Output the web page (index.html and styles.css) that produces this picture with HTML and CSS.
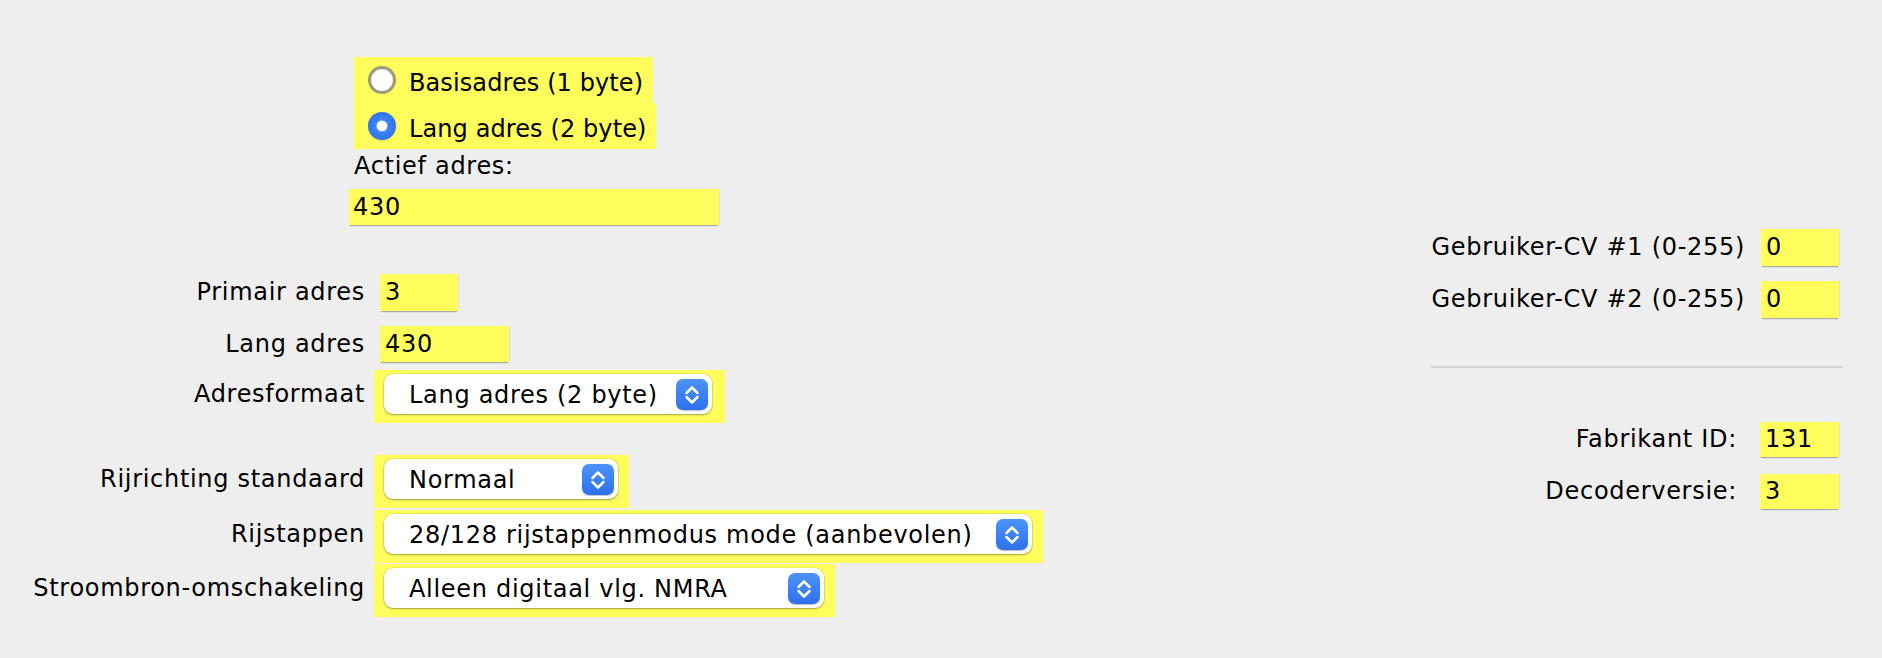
FILE: index.html
```html
<!DOCTYPE html>
<html lang="nl">
<head>
<meta charset="utf-8">
<title>Decoder adres</title>
<link rel="stylesheet" href="styles.css">
</head>
<body>
<div class="page">
  <div class="left">
    <div class="radio-group">
      <div class="radio-row">
        <span class="radio"></span>
        <span class="radio-text">Basisadres (1 byte)</span>
      </div>
      <div class="radio-row">
        <span class="radio selected"></span>
        <span class="radio-text">Lang adres (2 byte)</span>
      </div>
    </div>
    <div class="active-label">Actief adres:</div>
    <div class="field field-active">430</div>

    <div class="form">
      <div class="form-row row-primair">
        <div class="form-label label-field">Primair adres</div>
        <div class="field field-short">3</div>
      </div>
      <div class="form-row row-lang">
        <div class="form-label label-field">Lang adres</div>
        <div class="field field-mid">430</div>
      </div>
      <div class="form-row row-format">
        <div class="form-label label-combo">Adresformaat</div>
        <div class="combo-wrap">
          <div class="combo combo-format">
            <span class="combo-text">Lang adres (2 byte)</span>
            <span class="combo-btn"><svg width="32" height="31" viewBox="0 0 32 31"><path d="M10.5 14 L16 8.5 L21.5 14 M10.5 18 L16 23.5 L21.5 18" fill="none" stroke="#fff" stroke-width="2.5" stroke-linecap="round" stroke-linejoin="round"/></svg></span>
          </div>
        </div>
      </div>
      <div class="form-row row-richting">
        <div class="form-label label-combo">Rijrichting standaard</div>
        <div class="combo-wrap">
          <div class="combo combo-richting">
            <span class="combo-text">Normaal</span>
            <span class="combo-btn"><svg width="32" height="31" viewBox="0 0 32 31"><path d="M10.5 14 L16 8.5 L21.5 14 M10.5 18 L16 23.5 L21.5 18" fill="none" stroke="#fff" stroke-width="2.5" stroke-linecap="round" stroke-linejoin="round"/></svg></span>
          </div>
        </div>
      </div>
      <div class="form-row row-stappen">
        <div class="form-label label-combo">Rijstappen</div>
        <div class="combo-wrap">
          <div class="combo combo-stappen">
            <span class="combo-text">28/128 rijstappenmodus mode (aanbevolen)</span>
            <span class="combo-btn"><svg width="32" height="31" viewBox="0 0 32 31"><path d="M10.5 14 L16 8.5 L21.5 14 M10.5 18 L16 23.5 L21.5 18" fill="none" stroke="#fff" stroke-width="2.5" stroke-linecap="round" stroke-linejoin="round"/></svg></span>
          </div>
        </div>
      </div>
      <div class="form-row row-stroom">
        <div class="form-label label-combo">Stroombron-omschakeling</div>
        <div class="combo-wrap">
          <div class="combo combo-stroom">
            <span class="combo-text">Alleen digitaal vlg. NMRA</span>
            <span class="combo-btn"><svg width="32" height="31" viewBox="0 0 32 31"><path d="M10.5 14 L16 8.5 L21.5 14 M10.5 18 L16 23.5 L21.5 18" fill="none" stroke="#fff" stroke-width="2.5" stroke-linecap="round" stroke-linejoin="round"/></svg></span>
          </div>
        </div>
      </div>
    </div>
  </div>

  <div class="right">
    <div class="r-row r-cv">
      <div class="r-label">Gebruiker-CV #1 (0-255)</div>
      <div class="field field-r">0</div>
    </div>
    <div class="r-row r-cv r-cv2">
      <div class="r-label">Gebruiker-CV #2 (0-255)</div>
      <div class="field field-r">0</div>
    </div>
    <div class="separator"></div>
    <div class="r-row r-info r-fab">
      <div class="r-label">Fabrikant ID:</div>
      <div class="field field-r2">131</div>
    </div>
    <div class="r-row r-info r-ver">
      <div class="r-label">Decoderversie:</div>
      <div class="field field-r2">3</div>
    </div>
  </div>
</div>
</body>
</html>
```

FILE: styles.css
```css
html, body {
  margin: 0;
  padding: 0;
  background: #eeeeee;
}
body {
  font-family: "DejaVu Sans", "Liberation Sans", sans-serif;
  font-size: 24px;
  letter-spacing: 0.7px;
  color: #000;
  width: 1882px;
  height: 658px;
  overflow: hidden;
}
.page {
  display: flex;
  align-items: flex-start;
}
.left {
  display: flex;
  flex-direction: column;
  align-items: flex-start;
  padding-top: 57px;
}

/* radio group */
.radio-group {
  margin-left: 354px;
  display: flex;
  flex-direction: column;
  align-items: flex-start;
}
.radio-row {
  height: 46px;
  background: #fffd5b;
  display: flex;
  align-items: center;
  padding-left: 14px;
  padding-right: 10px;
  box-sizing: border-box;
}
.radio {
  width: 28px;
  height: 28px;
  border-radius: 50%;
  box-sizing: border-box;
  background: #fff;
  border: 3px solid #9c9c78;
  box-shadow: inset 0 1px 2px rgba(0,0,0,0.12);
  flex: none;
}
.radio.selected {
  border: none;
  background: radial-gradient(circle at 50% 50%, #fff 0, #fff 5px, #3f86f7 5.8px, #2f72ec 14px);
  box-shadow: 0 0.5px 1px rgba(0,0,0,0.2);
}
.radio-text {
  margin-left: 13px;
  padding-top: 5px;
  line-height: 30px;
  letter-spacing: 0.1px;
}

.active-label {
  margin-left: 354px;
  height: 35px;
  line-height: 35px;
  margin-bottom: 5px;
}

/* text fields */
.field {
  background: #fffd5b;
  box-sizing: border-box;
  padding-left: 5px;
  height: 36px;
  line-height: 36px;
  box-shadow: 0 2px 1px -1px rgba(0,0,0,0.28), 1px 0 0 rgba(0,0,0,0.06);
}
.field-active {
  margin-left: 349px;
  width: 370px;
  padding-left: 4px;
}
.field-short {
  width: 78px;
  height: 37px;
  line-height: 37px;
}
.field-mid {
  width: 129px;
}

/* form */
.form {
  margin-top: 49px;
  display: flex;
  flex-direction: column;
}
.form-row {
  display: flex;
  align-items: flex-start;
}
.form-label {
  width: 365px;
  flex: none;
  text-align: right;
  white-space: nowrap;
}
.form-row .field {
  margin-left: 15px;
}
.label-field {
  line-height: 37px;
}
.row-lang .label-field {
  line-height: 36px;
}
.label-combo {
  padding-top: 4px;
  line-height: 40px;
}
.row-lang { margin-top: 15px; }
.row-format { margin-top: 8px; }
.row-richting { margin-top: 32px; }
.row-stappen { margin-top: 2px; }
.row-stroom { margin-top: 1px; }

/* combo boxes */
.combo-wrap {
  margin-left: 9px;
  background: #fffd5b;
  padding: 4px 11px 9px 10px;
}
.row-format .combo-wrap { padding-right: 13px; }
.combo {
  height: 40px;
  box-sizing: border-box;
  background: #fff;
  border-radius: 9px;
  box-shadow: 0 1px 2px rgba(0,0,0,0.32), 0 0 0 0.5px rgba(0,0,0,0.12);
  display: flex;
  align-items: center;
  padding-right: 4px;
}
.combo-format { width: 328px; }
.combo-richting { width: 234px; }
.combo-stappen { width: 648px; }
.combo-stroom { width: 440px; }
.combo-text {
  white-space: nowrap;
  line-height: 40px;
  padding-top: 1px;
  padding-left: 25px;
}
.combo-btn {
  margin-left: auto;
  width: 32px;
  height: 31px;
  border-radius: 7px;
  background: linear-gradient(#4d93f9, #2d70eb);
  box-shadow: 0 0.5px 1px rgba(0,0,0,0.25);
  display: flex;
  flex: none;
}
.combo-btn svg { display: block; }

/* right column */
.right {
  margin-left: auto;
  margin-right: 39px;
  width: 412px;
  padding-top: 229px;
  display: flex;
  flex-direction: column;
}
.r-row {
  display: flex;
  justify-content: flex-end;
  align-items: flex-start;
  padding-right: 4px;
}
.r-label {
  white-space: nowrap;
}
.r-cv .r-label {
  margin-right: 16px;
  line-height: 37px;
}
.r-cv2 { margin-top: 15px; }
.field-r {
  width: 78px;
  height: 37px;
  line-height: 37px;
}
.separator {
  margin-top: 48px;
  height: 2px;
  background: #d5d5d5;
}
.r-info .r-label {
  margin-right: 23px;
  line-height: 35px;
}
.r-fab { margin-top: 54px; }
.r-ver { margin-top: 17px; }
.field-r2 {
  width: 79px;
  height: 35px;
  line-height: 35px;
}
```
